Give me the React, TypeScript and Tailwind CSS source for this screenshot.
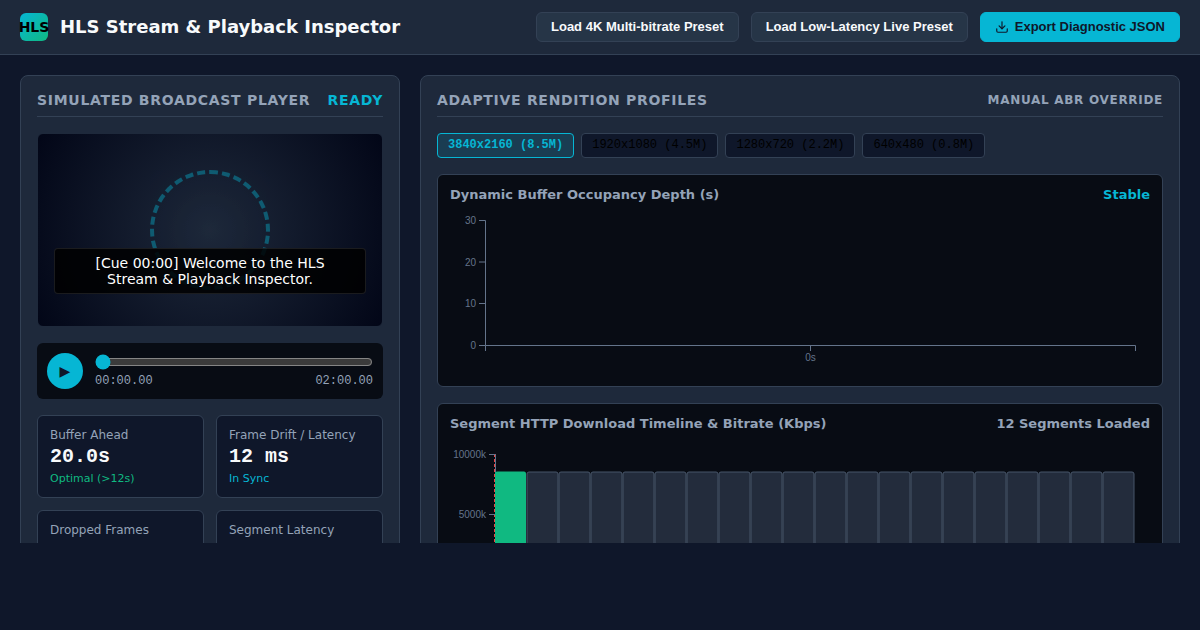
import { Download } from "lucide-react";
import { ReactNode, useState } from "react";

const renditions = [
  "3840x2160 (8.5M)",
  "1920x1080 (4.5M)",
  "1280x720 (2.2M)",
  "640x480 (0.8M)",
];

const stats = [
  { label: "Buffer Ahead", value: "20.0s", note: "Optimal (>12s)", noteCls: "text-[#10b981]" },
  { label: "Frame Drift / Latency", value: "12 ms", note: "In Sync", noteCls: "text-[#06b6d4]" },
  { label: "Dropped Frames" },
  { label: "Segment Latency" },
];

const bufferTicks = [
  { label: "30", y: 10.5 },
  { label: "20", y: 52 },
  { label: "10", y: 93.5 },
  { label: "0", y: 135.5 },
];

function PanelHeader({ title, children }: { title: string; children: ReactNode }) {
  return (
    <div className="flex items-center justify-between border-b border-[#334155] pb-2 text-sm/4 font-bold uppercase tracking-wider text-[#94a3b8]">
      <h2>{title}</h2>
      {children}
    </div>
  );
}

function ChartCard({
  title,
  aside,
  asideCls = "",
  children,
}: {
  title: string;
  aside: string;
  asideCls?: string;
  children: ReactNode;
}) {
  return (
    <div className="rounded-md border border-[#334155] bg-[#080c14] p-3">
      <div className="mb-2 flex justify-between text-[13px]/[15px] font-bold text-[#94a3b8]">
        <h3>{title}</h3>
        <span className={asideCls}>{aside}</span>
      </div>
      {children}
    </div>
  );
}

function BufferChart() {
  return (
    <svg viewBox="0 0 700 164" className="block w-full" fontFamily="Liberation Sans, sans-serif" fontSize="10" fill="#64748b">
      <g stroke="#64748b" fill="none">
        <path d="M29 10.5H35.5V135.5H29" />
        <path d="M29 52H35.5M29 93.5H35.5" />
        <path d="M35.5 141V135.5H685.5V141M360.5 135.5V141" />
      </g>
      {bufferTicks.map((t) => (
        <text key={t.label} x="26" y={t.y + 3.5} textAnchor="end">
          {t.label}
        </text>
      ))}
      <text x="360.5" y="151" textAnchor="middle">0s</text>
    </svg>
  );
}

function SegmentChart() {
  return (
    <svg viewBox="0 0 700 160" className="block w-full" fontFamily="Liberation Sans, sans-serif" fontSize="10" fill="#64748b">
      <path d="M45 15V135" stroke="#ef4444" strokeWidth="2" strokeDasharray="3 2" />
      <path d="M39 15.5H45.5V135.5H39M39 75.5H45" stroke="#64748b" fill="none" />
      <text x="36" y="19" textAnchor="end">10000k</text>
      <text x="36" y="79" textAnchor="end">5000k</text>
      {Array.from({ length: 20 }, (_, i) => (
        <rect
          key={i}
          x={45 + i * 32}
          y={i === 0 ? 32.5 : 33}
          width="31"
          height="102"
          rx="2"
          fill={i === 0 ? "#10b981" : "#232c3c"}
          stroke={i === 0 ? "none" : "#475569"}
        />
      ))}
    </svg>
  );
}

function Player() {
  const [position, setPosition] = useState(0);

  return (
    <>
      <div className="relative flex aspect-[173/97] items-center justify-center overflow-hidden rounded-md border border-[#1e293b] bg-[radial-gradient(circle,#1e293b_0%,#020617_100%)]">
        <div className="size-30 rounded-full border-4 border-dashed border-[#06b6d4] opacity-40" />
        <p className="absolute inset-x-4 bottom-8 rounded-sm border border-white/10 bg-black/85 px-4 py-[6px] text-center text-sm/4 text-white">
          [Cue 00:00] Welcome to the HLS Stream &amp; Playback Inspector.
        </p>
      </div>

      <div className="flex items-center gap-3 rounded-md bg-[#080c14] p-[10px]">
        <button
          type="button"
          aria-label="Play"
          className="flex size-9 shrink-0 items-center justify-center rounded-full bg-[#06b6d4] text-sm text-[#0f172a]"
        >
          ▶
        </button>
        <div className="flex min-w-0 flex-1 flex-col gap-1">
          <input
            type="range"
            aria-label="Playback position"
            min={0}
            max={120}
            value={position}
            onChange={(e) => setPosition(Number(e.target.value))}
            className="block h-4 w-full accent-[#06b6d4] [color-scheme:dark]"
          />
          <div className="flex justify-between font-['Liberation_Mono',monospace] text-xs/[14px] text-[#94a3b8]">
            <span>00:00.00</span>
            <span>02:00.00</span>
          </div>
        </div>
      </div>
    </>
  );
}

export default function App() {
  const [active, setActive] = useState(0);

  return (
    <div className="flex h-screen flex-col bg-[#0f172a] pb-[87px] font-['DejaVu_Sans',sans-serif] text-[#f8fafc]">
      <header className="flex items-center justify-between border-b border-[#334155] bg-[#1e293b] px-5 py-3">
        <div className="flex items-center gap-3">
          <div className="flex size-7 items-center justify-center rounded-md bg-[linear-gradient(135deg,#06b6d4,#10b981)] text-sm font-bold text-black">
            HLS
          </div>
          <h1 className="text-lg/6 font-bold">HLS Stream &amp; Playback Inspector</h1>
        </div>
        <div className="flex gap-3 font-['Liberation_Sans',sans-serif] text-[13px]/[14px] font-bold">
          <button type="button" className="rounded-md border border-[#334155] bg-[#263547] px-[14px] py-[7px]">
            Load 4K Multi-bitrate Preset
          </button>
          <button type="button" className="rounded-md border border-[#334155] bg-[#263547] px-[14px] py-[7px]">
            Load Low-Latency Live Preset
          </button>
          <button
            type="button"
            className="flex items-center gap-[6px] rounded-md border border-[#06b6d4] bg-[#06b6d4] px-[14px] py-[7px] text-[#0f172a]"
          >
            <Download size={14} />
            Export Diagnostic JSON
          </button>
        </div>
      </header>

      <main className="grid min-h-0 flex-1 grid-cols-[380px_1fr] items-start gap-5 overflow-hidden px-5 pt-5">
        <section className="flex flex-col gap-4 rounded-lg border border-[#334155] bg-[#1e293b] p-4">
          <PanelHeader title="Simulated Broadcast Player">
            <span className="text-[#06b6d4]">Ready</span>
          </PanelHeader>
          <Player />
          <div className="grid grid-cols-2 gap-3">
            {stats.map((s) => (
              <div key={s.label} className="flex flex-col gap-1 rounded-md border border-[#334155] bg-[#0f172a] p-3">
                <span className="text-xs/[14px] text-[#94a3b8]">{s.label}</span>
                {s.value && (
                  <span className="font-['Liberation_Mono',monospace] text-xl/[22px] font-bold">{s.value}</span>
                )}
                {s.note && <span className={`text-[11px]/[13px] ${s.noteCls}`}>{s.note}</span>}
              </div>
            ))}
          </div>
        </section>

        <section className="flex flex-col gap-4 rounded-lg border border-[#334155] bg-[#1e293b] p-4">
          <PanelHeader title="Adaptive Rendition Profiles">
            <span className="text-xs/4">Manual ABR Override</span>
          </PanelHeader>
          <div className="flex flex-wrap gap-[7px] font-['Liberation_Mono',monospace] text-xs/[15px]">
            {renditions.map((r, i) => (
              <button
                key={r}
                type="button"
                aria-pressed={i === active}
                onClick={() => setActive(i)}
                className={`rounded-sm border px-[10px] py-1 ${
                  i === active
                    ? "border-[#06b6d4] bg-[#06b6d4]/15 font-bold text-[#06b6d4]"
                    : "border-[#334155] bg-[#0f172a] text-black"
                }`}
              >
                {r}
              </button>
            ))}
          </div>
          <ChartCard title="Dynamic Buffer Occupancy Depth (s)" aside="Stable" asideCls="text-[#06b6d4]">
            <BufferChart />
          </ChartCard>
          <ChartCard title="Segment HTTP Download Timeline & Bitrate (Kbps)" aside="12 Segments Loaded">
            <SegmentChart />
          </ChartCard>
        </section>
      </main>
    </div>
  );
}
